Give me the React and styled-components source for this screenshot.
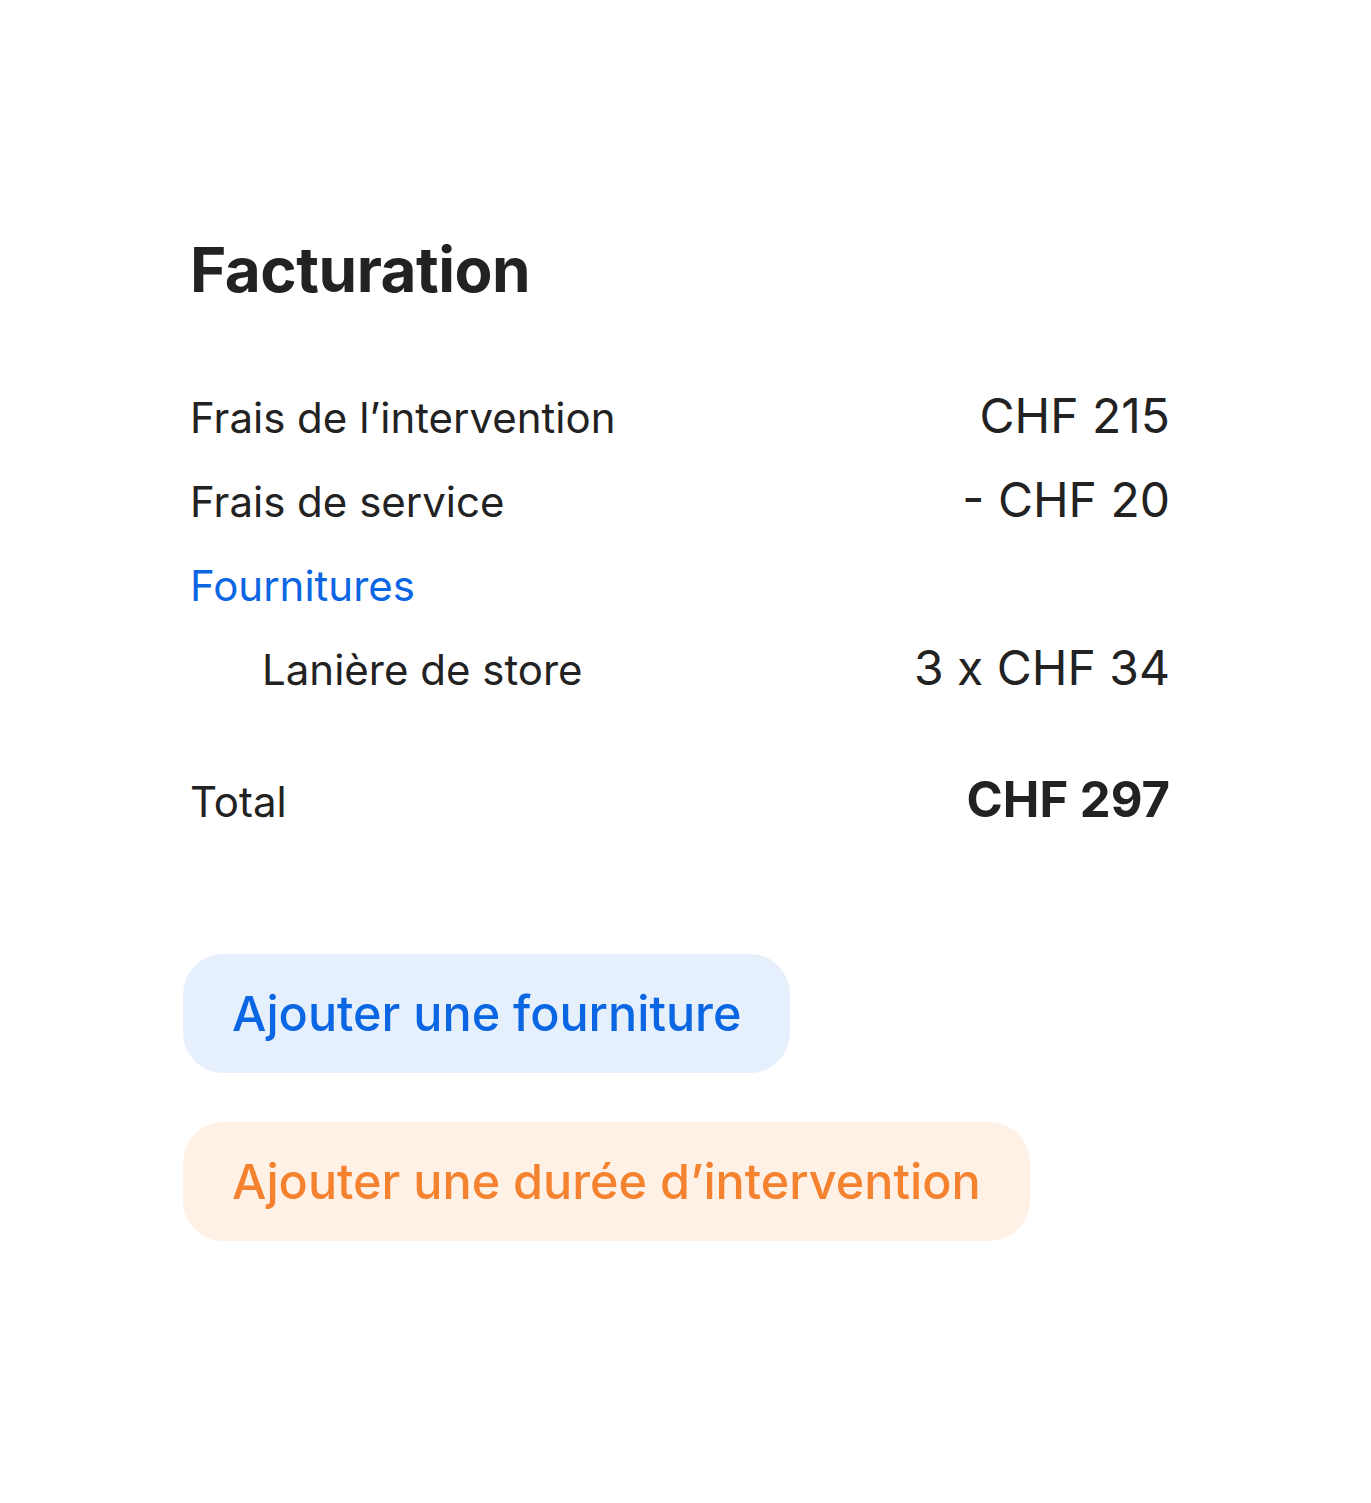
import React from 'react'
import styled, { createGlobalStyle } from 'styled-components'

const Global = createGlobalStyle`
  html, body {
    margin: 0;
    padding: 0;
    background: #ffffff;
  }
  body {
    font-family: Inter, "Noto Sans", "Liberation Sans", sans-serif;
    color: #222222;
  }
`

const Page = styled.div`
  width: 1371px;
  min-height: 1503px;
  box-sizing: border-box;
  padding: 232px 201px 0 190px;
`

const Title = styled.h1`
  margin: 0 0 78px;
  font-size: 62px;
  line-height: 76px;
  font-weight: 700;
  letter-spacing: -0.5px;
  color: #222222;
`

const Lines = styled.div`
  display: flex;
  flex-direction: column;
`

const Row = styled.div`
  display: flex;
  justify-content: space-between;
  align-items: baseline;
  height: 84px;
  padding-left: ${p => (p.$indent ? '72px' : '0')};
  margin-top: ${p => (p.$spaced ? '48px' : '0')};
`

const Label = styled.span`
  font-size: 42px;
  font-weight: 400;
  color: ${p => (p.$accent ? '#0b66e4' : '#222222')};
`

const Amount = styled.span`
  font-size: ${p => (p.$strong ? '49px' : '48px')};
  font-weight: ${p => (p.$strong ? 700 : 400)};
  color: #222222;
`

const Actions = styled.div`
  display: flex;
  flex-direction: column;
  align-items: flex-start;
  gap: 49px;
  margin-top: 100px;
  margin-left: -7px;
`

const Pill = styled.button`
  border: none;
  cursor: pointer;
  height: 119px;
  padding: 0 49px;
  border-radius: 40px;
  font-family: inherit;
  font-size: 48.5px;
  font-weight: 500;
  background: ${p => (p.$tone === 'orange' ? '#fff1e6' : '#e6f0fc')};
  color: ${p => (p.$tone === 'orange' ? '#f5822f' : '#0b66e4')};
`

const lines = [
  { label: 'Frais de l’intervention', amount: 'CHF 215' },
  { label: 'Frais de service', amount: '- CHF 20' },
  { label: 'Fournitures', accent: true },
  { label: 'Lanière de store', amount: '3 x CHF 34', indent: true },
]

export default function App() {
  return (
    <Page>
      <Global />
      <Title>Facturation</Title>
      <Lines>
        {lines.map((l, i) => (
          <Row key={i} $indent={l.indent}>
            <Label $accent={l.accent}>{l.label}</Label>
            <Amount>{l.amount || '\u00a0'}</Amount>
          </Row>
        ))}
        <Row $spaced>
          <Label>Total</Label>
          <Amount $strong>CHF 297</Amount>
        </Row>
      </Lines>
      <Actions>
        <Pill>Ajouter une fourniture</Pill>
        <Pill $tone="orange">Ajouter une durée d’intervention</Pill>
      </Actions>
    </Page>
  )
}
